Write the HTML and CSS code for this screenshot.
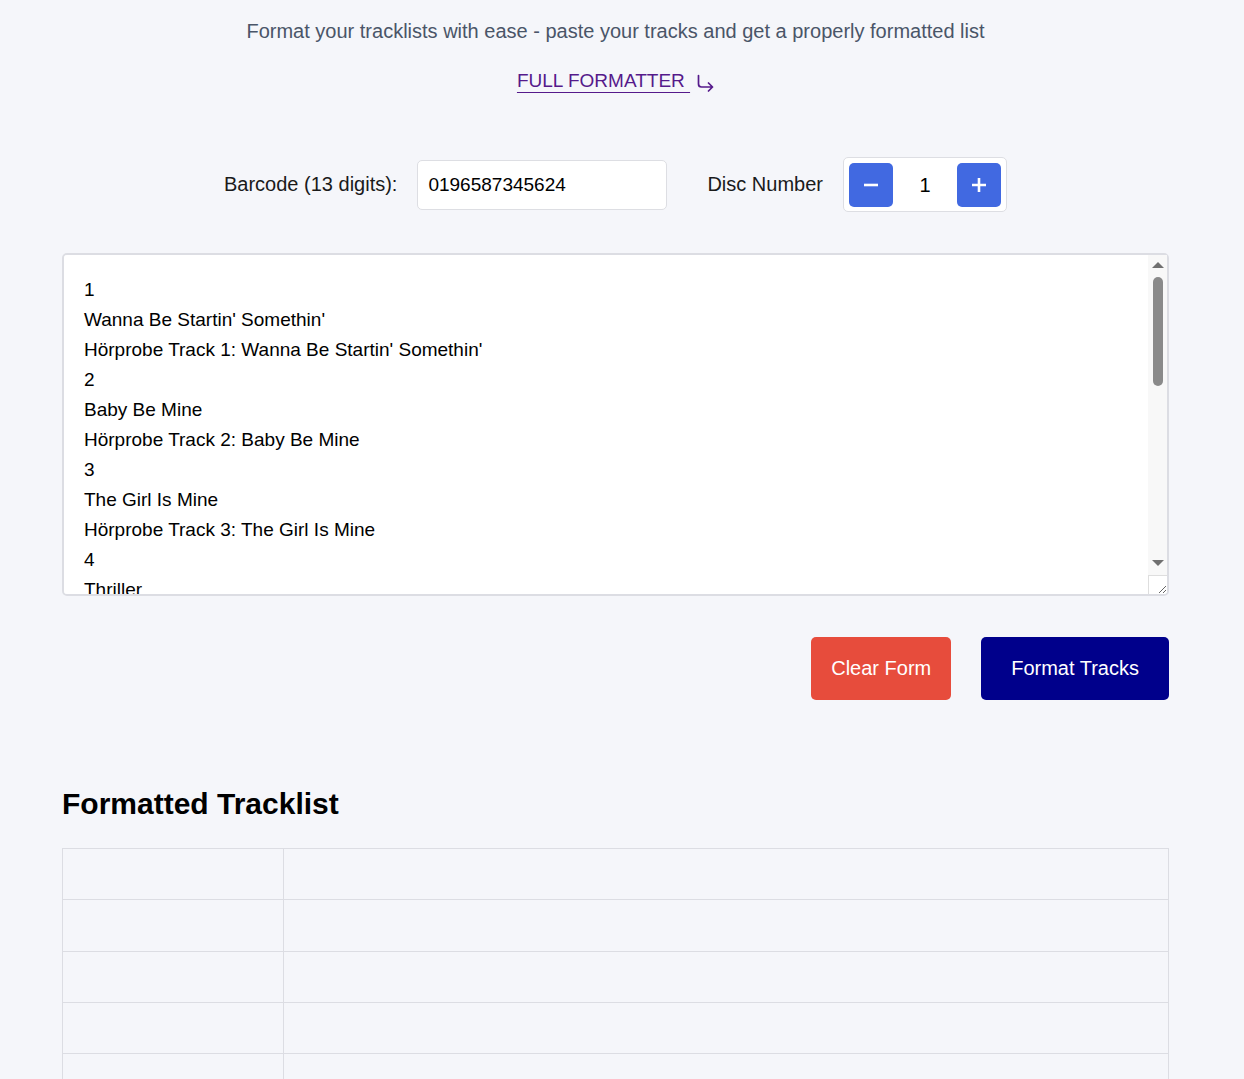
FILE: index.html
```html
<!DOCTYPE html>
<html lang="en">
<head>
<meta charset="utf-8">
<title>Tracklist Formatter</title>
<link rel="stylesheet" href="styles.css">
</head>
<body>
<main class="page">
  <header class="intro">
    <p class="subtitle">Format your tracklists with ease - paste your tracks and get a properly formatted list</p>
    <p class="link-line">
      <a class="full-link" href="#">FULL FORMATTER </a><svg class="link-icon" viewBox="0 0 18 18" width="18" height="18" aria-hidden="true"><path d="M2.5 1.5V10Q2.5 13 5.5 13H16.5M12.5 9L16.5 13L12.5 17" fill="none" stroke="#551a8b" stroke-width="1.7" stroke-linecap="round" stroke-linejoin="round"/></svg>
    </p>
  </header>

  <section class="controls">
    <div class="field">
      <label class="field-label" for="barcode">Barcode (13 digits):</label>
      <input class="barcode-input" id="barcode" type="text" value="0196587345624">
    </div>
    <div class="field">
      <span class="field-label">Disc Number</span>
      <div class="stepper">
        <button class="step-btn" type="button" aria-label="Decrease"><svg viewBox="0 0 16 16" width="16" height="16"><path d="M1 8H15" stroke="#fff" stroke-width="2.6"/></svg></button>
        <span class="step-value">1</span>
        <button class="step-btn" type="button" aria-label="Increase"><svg viewBox="0 0 16 16" width="16" height="16"><path d="M1 8H15M8 1V15" stroke="#fff" stroke-width="2.6"/></svg></button>
      </div>
    </div>
  </section>

  <div class="editor">
  <textarea class="tracks" spellcheck="false">1
Wanna Be Startin' Somethin'
Hörprobe Track 1: Wanna Be Startin' Somethin'
2
Baby Be Mine
Hörprobe Track 2: Baby Be Mine
3
The Girl Is Mine
Hörprobe Track 3: The Girl Is Mine
4
Thriller
Hörprobe Track 4: Thriller
5
Beat It
Hörprobe Track 5: Beat It
6
Billie Jean
Hörprobe Track 6: Billie Jean
7
Human Nature
Hörprobe Track 7: Human Nature
8
P.Y.T. (Pretty Young Thing)
Hörprobe Track 8: P.Y.T. (Pretty Young Thing)
9
The Lady in My Life
Hörprobe Track 9: The Lady in My Life</textarea>
    <div class="scrollbar" aria-hidden="true">
      <div class="sb-track">
        <svg class="sb-arrow sb-up" viewBox="0 0 12 6" width="12" height="6"><path d="M0 6L6 0L12 6Z" fill="#707070"/></svg>
        <div class="sb-thumb"></div>
        <svg class="sb-arrow sb-down" viewBox="0 0 12 6" width="12" height="6"><path d="M0 0L6 6L12 0Z" fill="#707070"/></svg>
      </div>
      <div class="sb-corner"></div>
    </div>
  </div>

  <div class="actions">
    <button class="btn btn-clear" type="button">Clear Form</button>
    <button class="btn btn-format" type="button">Format Tracks</button>
  </div>

  <h2 class="result-title">Formatted Tracklist</h2>
  <table class="result-table">
    <tbody>
      <tr><td class="col-num"></td><td></td></tr>
      <tr><td class="col-num"></td><td></td></tr>
      <tr><td class="col-num"></td><td></td></tr>
      <tr><td class="col-num"></td><td></td></tr>
      <tr><td class="col-num"></td><td></td></tr>
      <tr><td class="col-num"></td><td></td></tr>
    </tbody>
  </table>
</main>
</body>
</html>
```

FILE: styles.css
```css
html {
  scrollbar-width: none;
}

body {
  margin: 0;
  background: #f5f6fa;
  font-family: "Liberation Sans", Arial, sans-serif;
  color: #222;
}

.page {
  width: 1107px;
  margin: 0 0 0 62px;
  padding-bottom: 40px;
}

.intro {
  text-align: center;
  padding-top: 20px;
}

.subtitle {
  margin: 0;
  font-size: 20px;
  line-height: 23px;
  color: #4a5568;
}

.link-line {
  margin: 27px 0 0;
  font-size: 19px;
  line-height: 22px;
  display: flex;
  justify-content: center;
  align-items: center;
}

.full-link {
  color: #551a8b;
  text-decoration: underline;
  text-underline-offset: 5px;
  text-decoration-thickness: 1px;
  white-space: pre;
}

.link-icon {
  margin-left: 6px;
  margin-top: 3px;
}

.controls {
  margin-top: 65px;
  display: flex;
  justify-content: center;
  align-items: center;
  gap: 40px;
}

.field {
  display: flex;
  align-items: center;
  gap: 20px;
}

.field-label {
  font-size: 20px;
  color: #1a1a1a;
}

.barcode-input {
  box-sizing: border-box;
  width: 250px;
  height: 50px;
  border: 1px solid #dddee3;
  border-radius: 5px;
  background: #fff;
  padding: 0 10px;
  font-family: "Liberation Sans", Arial, sans-serif;
  font-size: 19px;
  color: #000;
  outline: none;
}

.stepper {
  display: flex;
  align-items: center;
  padding: 5px 5px 4px;
  border: 1px solid #dddee3;
  border-radius: 5px;
  background: #fff;
}

.step-btn {
  width: 44px;
  height: 44px;
  border: none;
  border-radius: 5px;
  background: #4169e1;
  display: flex;
  align-items: center;
  justify-content: center;
  padding: 0;
}

.step-value {
  width: 64px;
  text-align: center;
  font-size: 20px;
  color: #000;
}

.editor {
  position: relative;
  margin-top: 41px;
}

.tracks {
  display: block;
  box-sizing: border-box;
  width: 100%;
  height: 343px;
  margin: 0;
  border: 2px solid #dcdde3;
  border-radius: 5px;
  background: #fff;
  padding: 20px 40px 18px 20px;
  font-family: "Liberation Sans", Arial, sans-serif;
  font-size: 19px;
  line-height: 30px;
  color: #000;
  resize: both;
  outline: none;
  overflow-y: scroll;
}

.scrollbar {
  position: absolute;
  top: 2px;
  right: 2px;
  bottom: 2px;
  width: 19px;
  display: flex;
  flex-direction: column;
  pointer-events: none;
}

.sb-track {
  flex: 1;
  background: #f8f8f8;
  display: flex;
  flex-direction: column;
  align-items: center;
}

.sb-arrow {
  display: block;
  flex: none;
}

.sb-up {
  margin-top: 7px;
}

.sb-thumb {
  width: 10px;
  height: 109px;
  margin-top: 9px;
  border-radius: 5px;
  background: #8a8a8a;
}

.sb-down {
  margin-top: auto;
  margin-bottom: 9px;
}

.sb-corner {
  box-sizing: border-box;
  height: 19px;
  border-top: 1px solid #dedede;
  border-left: 1px solid #dedede;
}

.actions {
  margin-top: 41px;
  display: flex;
  justify-content: flex-end;
  gap: 30px;
}

.btn {
  border: none;
  border-radius: 5px;
  font-family: "Liberation Sans", Arial, sans-serif;
  font-size: 20px;
  line-height: 23px;
  color: #fff;
  padding: 20px 20px;
  cursor: pointer;
}

.btn-clear {
  background: #e74c3c;
}

.btn-format {
  background: #00008b;
  padding: 20px 30px;
}

.result-title {
  margin: 87px 0 27px;
  font-size: 30px;
  font-weight: bold;
  color: #000;
}

.result-table {
  width: 100%;
  border-collapse: collapse;
}

.result-table td {
  border: 1px solid #dcdde3;
  height: 50.25px;
  padding: 0;
}

.result-table .col-num {
  width: 20%;
}
```
